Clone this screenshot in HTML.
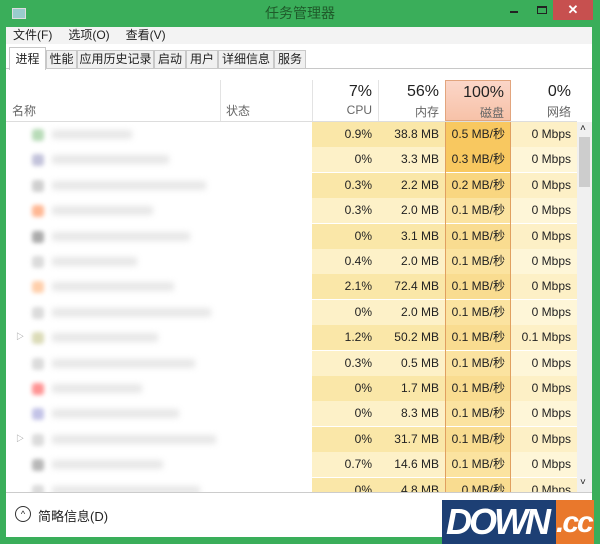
<!DOCTYPE html><html><head><meta charset="utf-8"><style>
*{margin:0;padding:0;box-sizing:border-box}
body{width:600px;height:544px;background:#3aae5a;font-family:"Liberation Sans","Noto Sans CJK SC",sans-serif;position:relative;overflow:hidden;font-size:12px;color:#222}
.title{position:absolute;left:0;top:0;width:600px;height:27px;text-align:center;font-size:14px;line-height:27px;color:#1f5a2a}
.win{position:absolute;left:6px;top:27px;width:586px;height:510px;background:#fff}
.menu{position:absolute;left:0;top:0;width:586px;height:17px;background:#f3f3f3;font-size:12px;line-height:17px}
.menu span{margin-left:7px;margin-right:9px}
.tabs{position:absolute;left:0;top:18px;height:24px;width:586px;border-bottom:1px solid #c8c8c8}
.tab{position:absolute;top:5px;height:19px;border:1px solid #c8c8c8;background:#f0f0f0;font-size:12px;line-height:17px;text-align:center}
.row{position:absolute;left:0;width:571px;height:25px}
.c{position:absolute;top:0;height:25px;line-height:25px;text-align:right;padding-right:6px;font-size:12px}
.blur{position:absolute;height:9px;top:8px;background:#ccc;filter:blur(3px);opacity:.45}
</style></head><body>
<div class="title">任务管理器</div>
<div style="position:absolute;left:12px;top:8px;width:14px;height:11px;background:#9cc;border:1px solid #ddd"></div>
<div style="position:absolute;left:510px;top:11px;width:8px;height:2px;background:#222"></div>
<div style="position:absolute;left:537px;top:6px;width:10px;height:8px;border:1px solid #222;border-top-width:2px"></div>
<div style="position:absolute;left:553px;top:0;width:40px;height:20px;background:#c7504f;color:#fff;text-align:center;line-height:20px;font-size:13px;font-weight:bold">✕</div>
<div class="win">
<div class="menu"><span>文件(F)</span><span>选项(O)</span><span>查看(V)</span></div>
<div class="tabs">
<div class="tab" style="left:3px;width:37px;top:2px;height:23px;background:#fff;border-bottom:none;line-height:22px">进程</div>
<div class="tab" style="left:40px;width:31px">性能</div>
<div class="tab" style="left:71px;width:77px">应用历史记录</div>
<div class="tab" style="left:148px;width:32px">启动</div>
<div class="tab" style="left:180px;width:32px">用户</div>
<div class="tab" style="left:212px;width:56px">详细信息</div>
<div class="tab" style="left:268px;width:32px">服务</div>
</div>
<div style="position:absolute;left:214px;top:53px;height:41px;border-left:1px solid #e3e3e3"></div>
<div style="position:absolute;left:6px;top:75px;color:#666">名称</div>
<div style="position:absolute;left:220px;top:75px;color:#666">状态</div>
<div style="position:absolute;left:306px;top:53px;width:66px;height:41px;border-left:1px solid #e3e3e3;text-align:right;padding-right:6px"><div style="font-size:16px;margin-top:3px">7%</div><div style="color:#666;margin-top:2px">CPU</div></div>
<div style="position:absolute;left:372px;top:53px;width:67px;height:41px;border-left:1px solid #e3e3e3;text-align:right;padding-right:6px"><div style="font-size:16px;margin-top:3px">56%</div><div style="color:#666;margin-top:2px">内存</div></div>
<div style="position:absolute;left:439px;top:53px;width:66px;height:41px;background:linear-gradient(#fbd6c8,#f7c2a8);border:1px solid #e2a57e;text-align:right;padding-right:6px"><div style="font-size:16px;margin-top:3px">100%</div><div style="color:#666;margin-top:2px">磁盘</div></div>
<div style="position:absolute;left:505px;top:53px;width:66px;height:41px;text-align:right;padding-right:6px"><div style="font-size:16px;margin-top:3px">0%</div><div style="color:#666;margin-top:2px">网络</div></div>
<div style="position:absolute;left:0;top:94px;width:571px;height:1px;background:#ddd"></div>
<div id="rows"></div>
<div style="position:absolute;left:439px;top:95px;width:66px;height:370px;border-left:1px solid #e0a060;border-right:1px solid #e0a060"></div>
<div style="position:absolute;left:571px;top:95px;width:15px;height:370px;background:#f0f0f0"></div>
<div style="position:absolute;left:573px;top:110px;width:11px;height:50px;background:#cdcdcd"></div>
<div style="position:absolute;left:574px;top:96px;font-size:10px">˄</div>
<div style="position:absolute;left:574px;top:450px;font-size:10px">˅</div>
<div style="position:absolute;left:0;top:465px;width:586px;height:45px;background:#fff;border-top:1px solid #ccc"></div>
<div style="position:absolute;left:9px;top:479px;width:16px;height:16px;border:1px solid #333;border-radius:50%;font-size:9px;text-align:center;line-height:14px">^</div>
<div style="position:absolute;left:32px;top:479px;font-size:13px">简略信息(D)</div>
</div>
<div style="position:absolute;left:442px;top:500px;width:114px;height:44px;background:#1d3f74;color:#fff;font:italic bold 36px/44px 'Liberation Sans',sans-serif;letter-spacing:-3px;padding-left:4px;overflow:hidden">DOWN</div>
<div style="position:absolute;left:556px;top:500px;width:38px;height:44px;background:#e9782c;color:#fff;font:italic bold 30px/46px 'Liberation Sans',sans-serif;letter-spacing:-2px;overflow:hidden">.cc</div>
<script>
var d=[["0.9%","38.8 MB","0.5 MB/秒","0 Mbps"],["0%","3.3 MB","0.3 MB/秒","0 Mbps"],["0.3%","2.2 MB","0.2 MB/秒","0 Mbps"],["0.3%","2.0 MB","0.1 MB/秒","0 Mbps"],["0%","3.1 MB","0.1 MB/秒","0 Mbps"],["0.4%","2.0 MB","0.1 MB/秒","0 Mbps"],["2.1%","72.4 MB","0.1 MB/秒","0 Mbps"],["0%","2.0 MB","0.1 MB/秒","0 Mbps"],["1.2%","50.2 MB","0.1 MB/秒","0.1 Mbps"],["0.3%","0.5 MB","0.1 MB/秒","0 Mbps"],["0%","1.7 MB","0.1 MB/秒","0 Mbps"],["0%","8.3 MB","0.1 MB/秒","0 Mbps"],["0%","31.7 MB","0.1 MB/秒","0 Mbps"],["0.7%","14.6 MB","0.1 MB/秒","0 Mbps"],["0%","4.8 MB","0 MB/秒","0 Mbps"]];
var dk=["#f8c860","#f8c860","#f9d680"],h="",ic=["#9c9","#aac","#bbb","#f96","#888","#ccc","#fb8","#ccc","#cc9","#ccc","#f66","#aad","#ccc","#999","#ccc"];
d.forEach(function(r,i){var t=95+i*25.4;var a=i%2?"#fdf1c8":"#fae7a8";
h+='<div class="row" style="top:'+t+'px">'+
'<div style="position:absolute;left:26px;top:7px;width:12px;height:12px;border-radius:3px;background:'+ic[i]+';filter:blur(2px);opacity:.7"></div>'+
'<div class="blur" style="left:46px;width:'+(80+(i*37)%90)+'px"></div>'+
(i==8||i==12?'<div style="position:absolute;left:10px;top:6px;font-size:8px;color:#888">▷</div>':'')+
'<div class="c" style="left:306px;width:66px;background:'+a+'">'+r[0]+'</div>'+
'<div class="c" style="left:372px;width:67px;background:'+a+'">'+r[1]+'</div>'+
'<div class="c" style="left:439px;width:66px;background:'+(dk[i]||(i%2?"#fbe3a0":"#f9dc90"))+'">'+r[2]+'</div>'+
'<div class="c" style="left:505px;width:66px;background:'+(i%2?"#fef6d8":"#fdf0c6")+'">'+r[3]+'</div></div>';});
document.getElementById('rows').innerHTML=h;
</script>
</body></html>
